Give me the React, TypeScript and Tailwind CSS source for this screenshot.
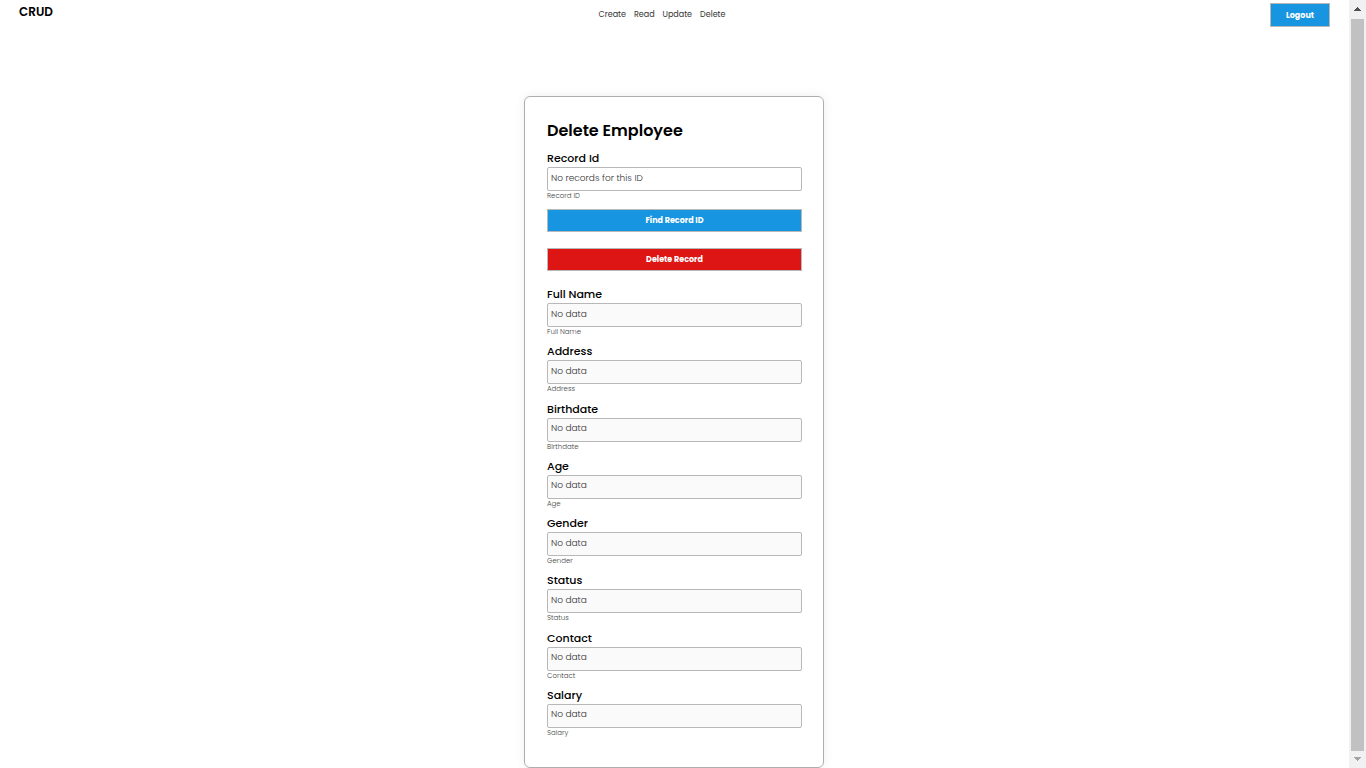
import { useId } from "react";

type FieldProps = {
  label: string;
  hint: string;
  placeholder: string;
  disabled?: boolean;
};

const links = ["Create", "Read", "Update", "Delete"];

const details = [
  "Full Name",
  "Address",
  "Birthdate",
  "Age",
  "Gender",
  "Status",
  "Contact",
  "Salary",
];

function Field({ label, hint, placeholder, disabled }: FieldProps) {
  const id = useId();
  return (
    <div className="flex flex-col">
      <label htmlFor={id} className="text-[11px] leading-[17px] font-medium text-black">
        {label}
      </label>
      <input
        id={id}
        type="text"
        placeholder={placeholder}
        disabled={disabled}
        aria-describedby={`${id}-hint`}
        className="h-6 w-full rounded-[2px] border border-[#b8b8b8] bg-white px-[3px] pb-0.5 text-[9px] font-light placeholder:text-[#333333] placeholder:opacity-100 disabled:bg-[#fafafa]"
      />
      <small id={`${id}-hint`} className="text-[7px] leading-[9px] font-light text-[#444444]">
        {hint}
      </small>
    </div>
  );
}

function ScrollRail() {
  return (
    <div aria-hidden="true" className="flex w-[17px] shrink-0 flex-col items-center bg-[#f1f1f1]">
      <svg className="h-[19px] w-[17px] shrink-0" viewBox="0 0 17 19" shapeRendering="crispEdges">
        <path d="M8 7h1v1h1v1h1v1h1v1H5v-1h1V9h1V8h1z" fill="#505050" />
      </svg>
      <div className="w-[13px] flex-1 bg-[#c1c1c1]" />
      <svg className="h-[17px] w-[17px] shrink-0" viewBox="0 0 17 17" shapeRendering="crispEdges">
        <path d="M5 6h7v1h-1v1h-1v1H9v1H8V9H7V8H6V7H5z" fill="#a3a3a3" />
      </svg>
    </div>
  );
}

export default function App() {
  return (
    <div className="flex min-h-screen bg-white font-['Poppins','Inter',sans-serif] text-black">
      <div className="flex min-w-0 flex-1 flex-col">
        <header className="grid h-8 grid-cols-[1fr_auto_1fr] items-start px-[19px]">
          <span className="pt-1 text-[12px] leading-4 font-semibold">CRUD</span>
          <nav className="flex gap-2 pt-2 pr-[25px] text-[8px] leading-[13px] text-[#333333]">
            {links.map((link) => (
              <a key={link} href={`#${link.toLowerCase()}`}>
                {link}
              </a>
            ))}
          </nav>
          <button
            type="button"
            className="mt-[3px] h-6 w-15 justify-self-end border border-[#b8b8b8] bg-[#1795e0] pt-px text-[8px] font-bold text-white"
          >
            Logout
          </button>
        </header>

        <main className="flex flex-1 flex-col items-center pt-16 pr-px">
          <form
            className="flex w-[300px] flex-1 flex-col rounded-md border border-[#adadad] pt-[22px] pr-[21px] pb-[30px] pl-[22px] shadow-[0_0_12px_rgba(0,0,0,0.07)]"
            onSubmit={(event) => event.preventDefault()}
          >
            <h1 className="mb-[7px] text-[16px] leading-6 font-semibold">Delete Employee</h1>
            <Field label="Record Id" hint="Record ID" placeholder="No records for this ID" />
            <button
              type="submit"
              className="mt-[9px] h-[23px] border border-[#b8b8b8] bg-[#1795e0] text-[8px] font-bold text-white"
            >
              Find Record ID
            </button>
            <button
              type="button"
              className="mt-4 h-[23px] border border-[#b8b8b8] bg-[#dd1515] text-[8px] font-bold text-white"
            >
              Delete Record
            </button>
            <div className="flex flex-1 flex-col justify-between pt-[15px]">
              {details.map((name) => (
                <Field key={name} label={name} hint={name} placeholder="No data" disabled />
              ))}
            </div>
          </form>
        </main>
      </div>
      <ScrollRail />
    </div>
  );
}
